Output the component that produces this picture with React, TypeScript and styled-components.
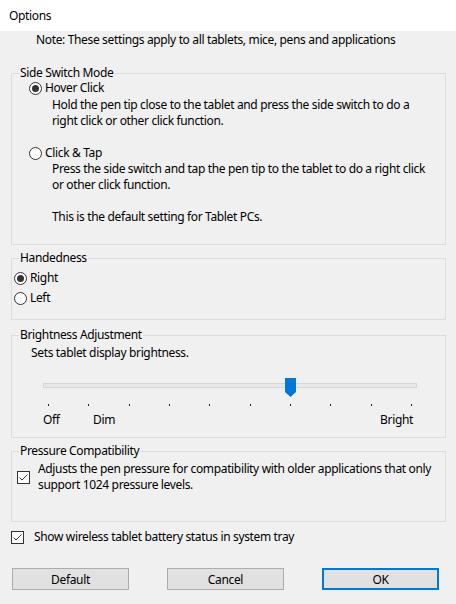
import React from "react";
import styled, { createGlobalStyle } from "styled-components";

const GlobalStyle = createGlobalStyle`
  html, body {
    margin: 0;
    padding: 0;
    background: #f0f0f0;
  }
  body {
    font-family: "Noto Sans", "Open Sans", sans-serif;
    font-size: 12px;
    letter-spacing: -0.35px;
    color: #000;
  }
`;

const Window = styled.div`
  width: 456px;
  height: 604px;
  background: #f0f0f0;
  display: flex;
  flex-direction: column;
  overflow: hidden;
`;

const TitleBar = styled.div`
  height: 31px;
  flex-shrink: 0;
  background: #fff;
  display: flex;
  align-items: center;
  padding-left: 9px;
`;

const Body = styled.div`
  display: flex;
  flex-direction: column;
  padding: 0 10px 0 11px;
`;

const Line = styled.div`
  line-height: 16px;
  white-space: nowrap;
`;

const Note = styled(Line)`
  margin-top: 1px;
  padding-left: 25px;
`;

const Group = styled.div<{ $height: number; $top: number; $pad: string }>`
  position: relative;
  box-sizing: border-box;
  height: ${({ $height }) => $height}px;
  margin-top: ${({ $top }) => $top}px;
  padding: ${({ $pad }) => $pad};
  border: 1px solid #dcdcdc;
`;

const Legend = styled.span`
  position: absolute;
  top: -7px;
  left: 7px;
  padding: 0 1px;
  line-height: 12px;
  background: #f0f0f0;
`;

const OptionRow = styled.label<{ $height?: number; $top?: number }>`
  display: flex;
  align-items: center;
  gap: 3px;
  height: ${({ $height }) => $height || 16}px;
  margin-top: ${({ $top }) => $top || 0}px;
  line-height: 16px;
`;

const Radio = styled.span<{ $checked?: boolean }>`
  position: relative;
  box-sizing: border-box;
  width: 13px;
  height: 13px;
  flex-shrink: 0;
  border: 1px solid #333;
  border-radius: 50%;
  background: #fff;

  &::after {
    content: "";
    display: ${({ $checked }) => ($checked ? "block" : "none")};
    position: absolute;
    left: 2px;
    top: 2px;
    width: 7px;
    height: 7px;
    border-radius: 50%;
    background: #333;
  }
`;

const Description = styled.div<{ $top?: number }>`
  margin-left: 23px;
  margin-top: ${({ $top }) => $top || 0}px;
`;

const CheckRow = styled.label<{ $gap: number; $top?: number }>`
  display: flex;
  align-items: center;
  gap: ${({ $gap }) => $gap}px;
  margin-top: ${({ $top }) => $top || 0}px;
  line-height: 16px;
`;

const CheckBoxFrame = styled.span`
  display: flex;
  width: 13px;
  height: 13px;
  flex-shrink: 0;
`;

const SliderArea = styled.div`
  position: relative;
  box-sizing: border-box;
  height: 19px;
  width: 374px;
  margin: 17px 0 0 12px;
  padding-top: 5px;
`;

const Track = styled.div`
  box-sizing: border-box;
  height: 5px;
  border: 1px solid #d6d6d6;
  background: #e7eaea;
`;

const Thumb = styled.svg`
  position: absolute;
  top: 0;
  left: 242px;
`;

const Ticks = styled.div`
  display: flex;
  justify-content: space-between;
  width: 364px;
  margin: 7px 0 0 17px;
`;

const Tick = styled.span`
  width: 1px;
  height: 2px;
  background: #222;
`;

const ScaleLabels = styled.div`
  display: flex;
  width: 370px;
  margin: 6px 0 0 12px;
  line-height: 16px;
`;

const ScaleLabel = styled.span<{ $width?: number; $right?: boolean }>`
  width: ${({ $width }) => ($width ? `${$width}px` : "auto")};
  flex: ${({ $width }) => ($width ? "none" : "1")};
  text-align: ${({ $right }) => ($right ? "right" : "left")};
`;

const ButtonRow = styled.div`
  display: flex;
  justify-content: space-between;
  width: 427px;
  margin: 23px 0 0 1px;
`;

const Button = styled.button<{ $primary?: boolean }>`
  box-sizing: border-box;
  width: 117px;
  height: 22px;
  padding: 0;
  font: inherit;
  letter-spacing: inherit;
  color: #000;
  background: #e1e1e1;
  border: ${({ $primary }) => ($primary ? "2px solid #0078d7" : "1px solid #adadad")};
`;

const CheckBox = () => (
  <CheckBoxFrame>
    <svg width="13" height="13" viewBox="0 0 13 13">
      <rect x="0.5" y="0.5" width="12" height="12" fill="#fff" stroke="#333" />
      <polyline points="2.5,6.5 5,9 10.5,3.5" fill="none" stroke="#333" strokeWidth="1" />
    </svg>
  </CheckBoxFrame>
);

export default function App() {
  return (
    <Window>
      <GlobalStyle />
      <TitleBar>Options</TitleBar>
      <Body>
        <Note>Note: These settings apply to all tablets, mice, pens and applications</Note>

        <Group $height={172} $top={25} $pad="6px 0 0 17px">
          <Legend>Side Switch Mode</Legend>
          <OptionRow>
            <Radio $checked />
            Hover Click
          </OptionRow>
          <Description $top={1}>
            <Line>Hold the pen tip close to the tablet and press the side switch to do a</Line>
            <Line>right click or other click function.</Line>
          </Description>
          <OptionRow $top={16}>
            <Radio />
            Click &amp; Tap
          </OptionRow>
          <Description>
            <Line>Press the side switch and tap the pen tip to the tablet to do a right click</Line>
            <Line>or other click function.</Line>
            <Line>&nbsp;</Line>
            <Line>This is the default setting for Tablet PCs.</Line>
          </Description>
        </Group>

        <Group $height={62} $top={13} $pad="9px 0 0 2px">
          <Legend>Handedness</Legend>
          <OptionRow $height={20}>
            <Radio $checked />
            Right
          </OptionRow>
          <OptionRow $height={20}>
            <Radio />
            Left
          </OptionRow>
        </Group>

        <Group $height={103} $top={15} $pad="9px 0 0 19px">
          <Legend>Brightness Adjustment</Legend>
          <Line>Sets tablet display brightness.</Line>
          <SliderArea>
            <Track />
            <Thumb width="11" height="19" viewBox="0 0 11 19">
              <path d="M0 0H11V14L5.5 19L0 14Z" fill="#0078d7" />
            </Thumb>
          </SliderArea>
          <Ticks>
            {Array.from({ length: 10 }).map((_, i) => (
              <Tick key={i} />
            ))}
          </Ticks>
          <ScaleLabels>
            <ScaleLabel $width={50}>Off</ScaleLabel>
            <ScaleLabel>Dim</ScaleLabel>
            <ScaleLabel $width={40} $right>
              Bright
            </ScaleLabel>
          </ScaleLabels>
        </Group>

        <Group $height={71} $top={13} $pad="9px 0 0 5px">
          <Legend>Pressure Compatibility</Legend>
          <CheckRow $gap={8}>
            <CheckBox />
            <div>
              <Line>Adjusts the pen pressure for compatibility with older applications that only</Line>
              <Line>support 1024 pressure levels.</Line>
            </div>
          </CheckRow>
        </Group>

        <CheckRow $gap={10} $top={7}>
          <CheckBox />
          Show wireless tablet battery status in system tray
        </CheckRow>

        <ButtonRow>
          <Button>Default</Button>
          <Button>Cancel</Button>
          <Button $primary>OK</Button>
        </ButtonRow>
      </Body>
    </Window>
  );
}
